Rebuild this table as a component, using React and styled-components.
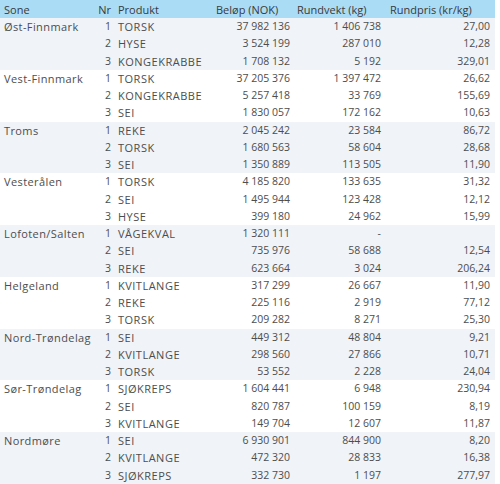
import React from "react";
import styled, { createGlobalStyle } from "styled-components";

const GlobalStyle = createGlobalStyle`
  body {
    margin: 0;
    background: #fff;
    font-family: "Open Sans", "Liberation Sans", sans-serif;
  }
`;

const data = [
  { sone: "Øst-Finnmark", rows: [["TORSK", "37 982 136", "1 406 738", "27,00"], ["HYSE", "3 524 199", "287 010", "12,28"], ["KONGEKRABBE", "1 708 132", "5 192", "329,01"]] },
  { sone: "Vest-Finnmark", rows: [["TORSK", "37 205 376", "1 397 472", "26,62"], ["KONGEKRABBE", "5 257 418", "33 769", "155,69"], ["SEI", "1 830 057", "172 162", "10,63"]] },
  { sone: "Troms", rows: [["REKE", "2 045 242", "23 584", "86,72"], ["TORSK", "1 680 563", "58 604", "28,68"], ["SEI", "1 350 889", "113 505", "11,90"]] },
  { sone: "Vesterålen", rows: [["TORSK", "4 185 820", "133 635", "31,32"], ["SEI", "1 495 944", "123 428", "12,12"], ["HYSE", "399 180", "24 962", "15,99"]] },
  { sone: "Lofoten/Salten", rows: [["VÅGEKVAL", "1 320 111", "-", ""], ["SEI", "735 976", "58 688", "12,54"], ["REKE", "623 664", "3 024", "206,24"]] },
  { sone: "Helgeland", rows: [["KVITLANGE", "317 299", "26 667", "11,90"], ["REKE", "225 116", "2 919", "77,12"], ["TORSK", "209 282", "8 271", "25,30"]] },
  { sone: "Nord-Trøndelag", rows: [["SEI", "449 312", "48 804", "9,21"], ["KVITLANGE", "298 560", "27 866", "10,71"], ["TORSK", "53 552", "2 228", "24,04"]] },
  { sone: "Sør-Trøndelag", rows: [["SJØKREPS", "1 604 441", "6 948", "230,94"], ["SEI", "820 787", "100 159", "8,19"], ["KVITLANGE", "149 704", "12 607", "11,87"]] },
  { sone: "Nordmøre", rows: [["SEI", "6 930 901", "844 900", "8,20"], ["KVITLANGE", "472 320", "28 833", "16,38"], ["SJØKREPS", "332 730", "1 197", "277,97"]] },
];

const Table = styled.table`
  width: 495px;
  border-collapse: collapse;
  table-layout: fixed;
  font-size: 10.5px;
  color: #4d4d4d;
`;

const HeadRow = styled.tr`
  background: #abdcf5;
  height: 18px;
`;

const Th = styled.th`
  font-weight: 400;
  font-size: 11px;
  color: #3a3a3a;
  text-align: ${(p) => (p.$right ? "right" : "left")};
  padding: 0 ${(p) => p.$pr || 0}px 0 ${(p) => p.$pl || 0}px;
  white-space: nowrap;
  overflow: hidden;
`;

const Group = styled.tbody`
  background: ${(p) => (p.$band ? "#f0f3f8" : "#fff")};
`;

const Row = styled.tr`
  height: 17.25px;
`;

const Td = styled.td`
  text-align: ${(p) => (p.$right ? "right" : "left")};
  padding: 0 ${(p) => p.$pr || 0}px 0 ${(p) => p.$pl || 0}px;
  white-space: nowrap;
  line-height: 17px;
`;

const TextTd = styled(Td)`
  font-size: 11px;
  letter-spacing: ${(p) => p.$ls || 0.5}px;
`;

export default function App() {
  return (
    <>
      <GlobalStyle />
      <Table>
        <colgroup>
          <col style={{ width: 88 }} />
          <col style={{ width: 26 }} />
          <col style={{ width: 100 }} />
          <col style={{ width: 78 }} />
          <col style={{ width: 92 }} />
          <col style={{ width: 111 }} />
        </colgroup>
        <thead>
          <HeadRow>
            <Th $pl={4}>Sone</Th>
            <Th $right $pr={3}>Nr</Th>
            <Th $pl={4}>Produkt</Th>
            <Th $pl={2}>Beløp (NOK)</Th>
            <Th $pl={5}>Rundvekt (kg)</Th>
            <Th $pl={6}>Rundpris (kr/kg)</Th>
          </HeadRow>
        </thead>
        {data.map((g, gi) => (
          <Group key={g.sone} $band={gi % 2 === 0}>
            {g.rows.map((r, i) => (
              <Row key={i}>
                <TextTd $pl={4} $ls={0.4}>{i === 0 ? g.sone : ""}</TextTd>
                <Td $right $pr={3}>{i + 1}</Td>
                <TextTd $pl={4}>{r[0]}</TextTd>
                <Td $right $pr={2}>{r[1]}</Td>
                <Td $right $pr={3}>{r[2]}</Td>
                <Td $right $pr={5}>{r[3]}</Td>
              </Row>
            ))}
          </Group>
        ))}
      </Table>
    </>
  );
}
